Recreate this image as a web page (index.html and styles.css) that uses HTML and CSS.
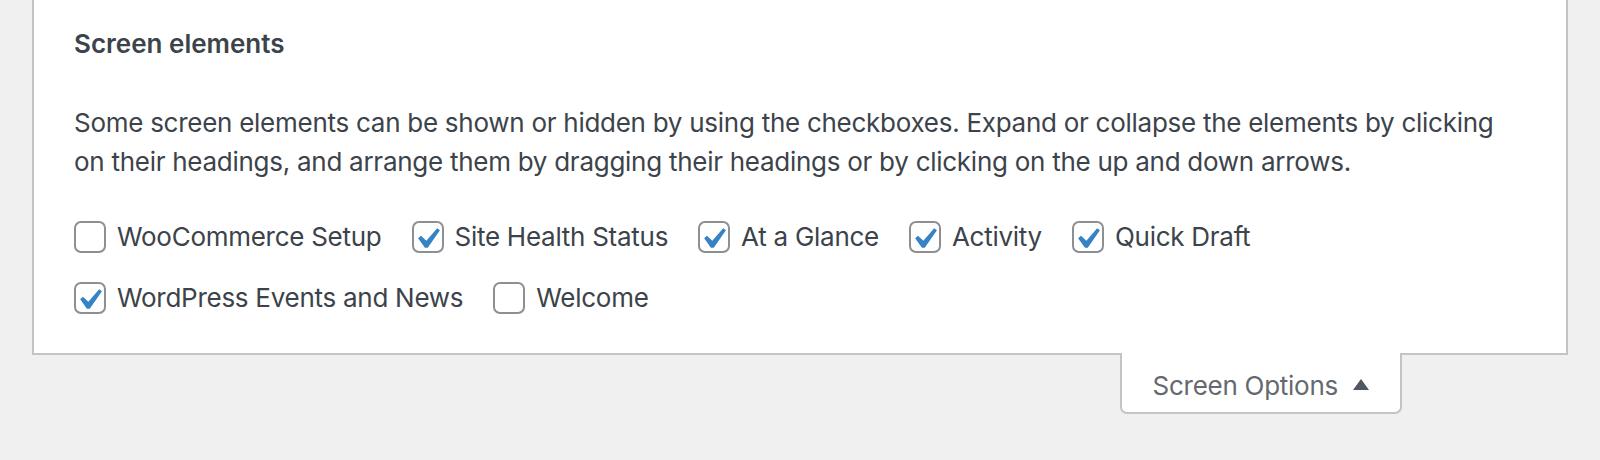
FILE: index.html
```html
<!DOCTYPE html>
<html lang="en">
<head>
    <meta charset="UTF-8">
    <meta name="viewport" content="width=device-width, initial-scale=1.0">
    <title>Screen Options</title>
    <link rel="stylesheet" href="styles.css">
</head>
<body>
    <div class="screen-meta">
        <div class="panel">
            <h5>Screen elements</h5>
            <p>Some screen elements can be shown or hidden by using the checkboxes. Expand or collapse the elements by clicking on their headings, and arrange them by dragging their headings or by clicking on the up and down arrows.</p>
            <div class="prefs">
                <label class="pref"><span class="box"></span>WooCommerce Setup</label>
                <label class="pref"><span class="box checked"><svg viewBox="0 0 20 20"><path d="M14.83 4.89l1.34.94-5.81 8.38H9.02L5.78 9.67l1.34-1.25 2.57 2.4z"/></svg></span>Site Health Status</label>
                <label class="pref"><span class="box checked"><svg viewBox="0 0 20 20"><path d="M14.83 4.89l1.34.94-5.81 8.38H9.02L5.78 9.67l1.34-1.25 2.57 2.4z"/></svg></span>At a Glance</label>
                <label class="pref"><span class="box checked"><svg viewBox="0 0 20 20"><path d="M14.83 4.89l1.34.94-5.81 8.38H9.02L5.78 9.67l1.34-1.25 2.57 2.4z"/></svg></span>Activity</label>
                <label class="pref"><span class="box checked"><svg viewBox="0 0 20 20"><path d="M14.83 4.89l1.34.94-5.81 8.38H9.02L5.78 9.67l1.34-1.25 2.57 2.4z"/></svg></span>Quick Draft</label>
                <label class="pref"><span class="box checked"><svg viewBox="0 0 20 20"><path d="M14.83 4.89l1.34.94-5.81 8.38H9.02L5.78 9.67l1.34-1.25 2.57 2.4z"/></svg></span>WordPress Events and News</label>
                <label class="pref"><span class="box"></span>Welcome</label>
            </div>
        </div>
        <div class="links">
            <div class="tab">
                Screen Options
                <svg class="arrow" viewBox="0 0 16 11"><polygon points="8,0 16,11 0,11"/></svg>
            </div>
        </div>
    </div>
</body>
</html>
```

FILE: styles.css
```css
* {
    box-sizing: border-box;
}
body {
    margin: 0;
    background-color: #f0f0f1;
    font-family: Inter, "Noto Sans", sans-serif;
    color: #3c434a;
    letter-spacing: -0.27px;
}
.screen-meta {
    margin: 0 32px;
}
.panel {
    background-color: #fff;
    border: 2px solid #c3c4c7;
    border-top: none;
    padding: 24px 40px 25px;
}
.panel h5 {
    margin: 0;
    font-size: 26px;
    line-height: 39px;
    font-weight: 600;
    letter-spacing: 0;
}
.panel p {
    margin: 40px 0 25px;
    font-size: 26px;
    line-height: 39px;
}
.prefs {
    display: flex;
    flex-wrap: wrap;
}
.pref {
    display: inline-flex;
    align-items: center;
    height: 61px;
    margin-right: 30px;
    font-size: 26px;
}
.box {
    position: relative;
    width: 32px;
    height: 32px;
    margin-right: 11px;
    border: 2px solid #8c8f94;
    border-radius: 7px;
    background-color: #fff;
}
.box svg {
    position: absolute;
    left: -8px;
    top: -5px;
    width: 42px;
    height: 42px;
    fill: #3582c4;
}
.links {
    display: flex;
    justify-content: flex-end;
    padding-right: 166px;
}
.tab {
    display: flex;
    align-items: center;
    margin-top: -2px;
    padding: 13px 31px 7px;
    background-color: #fff;
    border: 2px solid #c3c4c7;
    border-top: none;
    border-radius: 0 0 7px 7px;
    color: #646970;
    font-size: 26px;
    line-height: 39px;
}
.arrow {
    width: 16px;
    height: 11px;
    margin-left: 15px;
    margin-bottom: 2px;
    fill: #50575e;
}
```
